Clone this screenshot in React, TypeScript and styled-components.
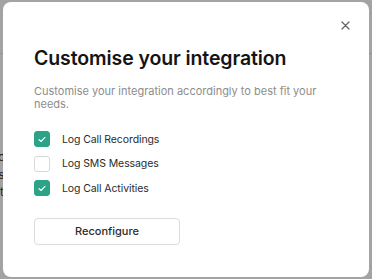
import styled, { createGlobalStyle } from 'styled-components';

const GlobalStyle = createGlobalStyle`
  html, body {
    margin: 0;
    padding: 0;
    width: 372px;
    height: 279px;
    overflow: hidden;
    font-family: Inter, "Liberation Sans", sans-serif;
  }
`;

const options = [
  { label: 'Log Call Recordings', checked: true },
  { label: 'Log SMS Messages', checked: false },
  { label: 'Log Call Activities', checked: true },
];

export default function App() {
  return (
    <>
      <GlobalStyle />
      <Backdrop>
        <PageHeader />
        <PageBody>
          <Ghost>Lo</Ghost>
          <Ghost>Es</Ghost>
          <Ghost>Ct</Ghost>
        </PageBody>
      </Backdrop>
      <Overlay>
        <Modal>
          <CloseButton aria-label='Close'>
            <svg width='9' height='9' viewBox='0 0 9 9'>
              <path d='M1 1L8 8M8 1L1 8' stroke='#666' strokeWidth='1.3' strokeLinecap='round' />
            </svg>
          </CloseButton>

          <Title>Customise your integration</Title>
          <Subtitle>Customise your integration accordingly to best fit your needs.</Subtitle>

          <Options>
            {options.map((o) => (
              <Option key={o.label}>
                <Box $checked={o.checked}>
                  {o.checked && (
                    <svg width='8' height='7' viewBox='0 0 8 7'>
                      <path d='M1 3.6L3 5.5L7 1.3' fill='none' stroke='#fff' strokeWidth='1.1' strokeLinecap='round' strokeLinejoin='round' />
                    </svg>
                  )}
                </Box>
                <Label>{o.label}</Label>
              </Option>
            ))}
          </Options>

          <Button>Reconfigure</Button>
        </Modal>
      </Overlay>
    </>
  );
}

const Backdrop = styled('div')`
  width: 372px;
  height: 279px;
  background: #fff;
`;

const PageHeader = styled('div')`
  height: 53px;
  border-bottom: 1px solid #e4e4e4;
`;

const PageBody = styled('div')`
  display: flex;
  flex-direction: column;
  gap: 3.5px;
  padding: 96px 0 0 0;
  margin-left: -8px;
`;

const Ghost = styled('span')`
  font-size: 11px;
  color: #333;
`;

const Overlay = styled('div')`
  position: fixed;
  inset: 0;
  background: rgba(0, 0, 0, 0.36);
  display: flex;
  align-items: flex-start;
  justify-content: center;
  padding-top: 2px;
`;

const Modal = styled('div')`
  position: relative;
  box-sizing: border-box;
  width: 366px;
  height: 275px;
  background: #fff;
  border-radius: 8px;
  padding: 42px 31px 0;
  display: flex;
  flex-direction: column;
`;

const CloseButton = styled('button')`
  position: absolute;
  top: 15px;
  right: 16px;
  width: 16px;
  height: 16px;
  padding: 0;
  border: none;
  background: none;
  display: flex;
  align-items: center;
  justify-content: center;
`;

const Title = styled('h1')`
  margin: 0;
  font-size: 19.5px;
  font-weight: 600;
  line-height: 28px;
  color: #141414;
  letter-spacing: -0.1px;
`;

const Subtitle = styled('p')`
  margin: 13px 0 0;
  font-size: 11px;
  line-height: 13px;
  color: #8d8d8d;
  width: 292px;
`;

const Options = styled('div')`
  display: flex;
  flex-direction: column;
  gap: 8px;
  margin-top: 20px;
`;

const Option = styled('label')`
  display: flex;
  align-items: center;
  gap: 12px;
  height: 16.5px;
`;

const Box = styled('span')<{ $checked: boolean }>`
  box-sizing: border-box;
  width: 16px;
  height: 16px;
  border-radius: 3px;
  display: flex;
  align-items: center;
  justify-content: center;
  background: ${(p) => (p.$checked ? '#2aa387' : '#fff')};
  border: 1px solid ${(p) => (p.$checked ? '#2aa387' : '#d8d8d8')};
`;

const Label = styled('span')`
  font-size: 10.5px;
  letter-spacing: -0.1px;
  color: #2b2b2b;
`;

const Button = styled('button')`
  margin-top: 21px;
  width: 146px;
  height: 27px;
  border: 1px solid #dcdcdc;
  border-radius: 4px;
  background: #fff;
  font-family: inherit;
  font-size: 11px;
  font-weight: 500;
  color: #2b2b2b;
`;
